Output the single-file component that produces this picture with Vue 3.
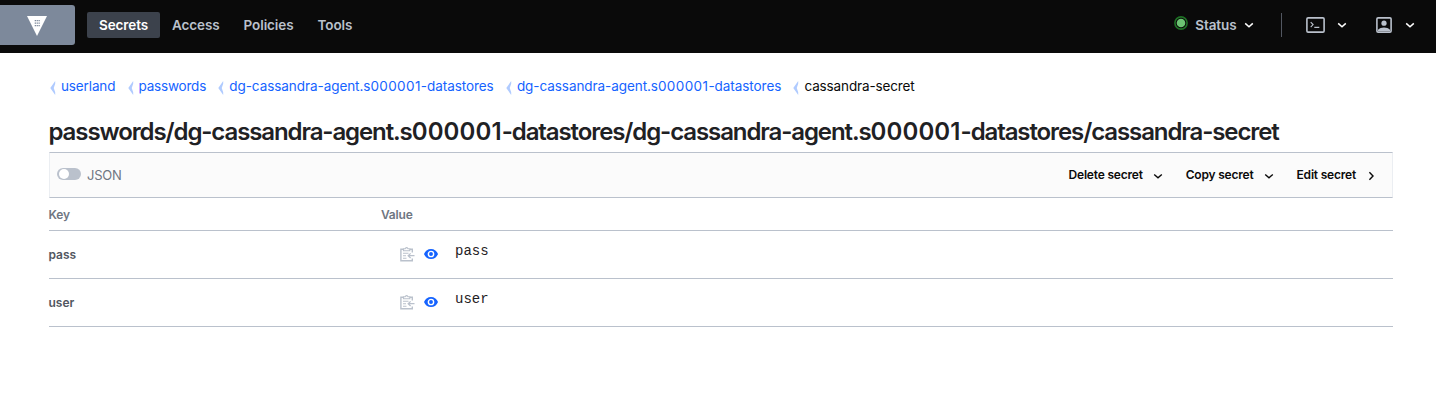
<script setup>
const nav = ['Secrets', 'Access', 'Policies', 'Tools']
const crumbs = [
  'userland',
  'passwords',
  'dg-cassandra-agent.s000001-datastores',
  'dg-cassandra-agent.s000001-datastores',
  'cassandra-secret',
]
const title = crumbs.slice(1).join('/')
// Digits are set wider than the surrounding letters.
const runs = (text) => text.split(/(\d+)/).filter(Boolean).map((t) => ({ t, num: /^\d/.test(t) }))
const rows = [
  { key: 'pass', value: 'pass' },
  { key: 'user', value: 'user' },
]
const actions = [
  { label: 'Delete secret', icon: 'down' },
  { label: 'Copy secret', icon: 'down' },
  { label: 'Edit secret', icon: 'right' },
]
const down = 'M1.2 3.4 5 6.8 8.8 3.4'
const right = 'M3.4 1.3 7 5 3.4 8.7'
</script>

<template>
  <div class="page">
    <header class="topbar">
      <a class="brand">
        <svg width="20" height="20" viewBox="0 0 20 20">
          <path d="M0 0H20L10 20Z" fill="#fff" />
          <path d="M7.7 4.7h5.2M7.7 7.2h5.2M7.7 9.7h5.2" stroke="#7d899b" stroke-width="1.2" stroke-dasharray="1.3 .6" />
        </svg>
      </a>
      <nav class="nav">
        <a v-for="(n, i) in nav" :key="n" :class="{ active: i === 0 }">{{ n }}</a>
      </nav>
      <div class="tools">
        <svg class="dot" width="14" height="14" viewBox="0 0 14 14">
          <circle cx="7" cy="7" r="6.1" fill="#0a0a0a" stroke="#1e7125" stroke-width="1.6" />
          <circle cx="7" cy="7" r="4.3" fill="#6cc473" />
        </svg>
        <span class="status">Status</span>
        <svg class="chev" width="10" height="10" viewBox="0 0 10 10"><path :d="down" /></svg>
        <i class="divider"></i>
        <svg class="console" width="19" height="16" viewBox="0 0 19 16" fill="none">
          <rect x=".9" y=".9" width="17.2" height="14.2" rx="1.2" stroke="#bac1cc" stroke-width="1.6" />
          <path d="M4.7 5.1 7.1 7.6 4.7 10.1M8.3 10.4h5" stroke="#bac1cc" stroke-width="1.1" />
        </svg>
        <svg class="chev c2" width="10" height="10" viewBox="0 0 10 10"><path :d="down" /></svg>
        <svg class="user" width="16" height="16" viewBox="0 0 16 16">
          <rect x=".9" y=".9" width="14.2" height="14.2" rx="1.2" fill="none" stroke="#bac1cc" stroke-width="1.6" />
          <circle cx="8" cy="6.2" r="2.6" fill="#bac1cc" />
          <path d="M2 14V12.7C3.6 11.3 5.6 10.4 8 10.4S12.4 11.3 14 12.7V14Z" fill="#bac1cc" />
        </svg>
        <svg class="chev c3" width="10" height="10" viewBox="0 0 10 10"><path :d="down" /></svg>
      </div>
    </header>

    <main class="main">
      <ul class="crumbs">
        <li v-for="(c, i) in crumbs" :key="i" :class="{ long: c.length > 20 }">
          <svg width="6" height="14" viewBox="0 0 6 14"><path d="M5.2 0 .3 7 5.2 14V11.3L3.7 7 5.2 2.7Z" fill="#b0cbff" /></svg>
          <span><span v-for="(r, j) in runs(c)" :key="j" :class="{ num: r.num }">{{ r.t }}</span></span>
        </li>
      </ul>
      <h1><span v-for="(r, j) in runs(title)" :key="j" :class="{ num: r.num }">{{ r.t }}</span></h1>

      <div class="toolbar">
        <span class="switch"></span>
        <span class="json">JSON</span>
        <div class="actions">
          <button v-for="a in actions" :key="a.label">
            <span>{{ a.label }}</span>
            <svg width="10" height="10" viewBox="0 0 10 10"><path :d="a.icon === 'down' ? down : right" /></svg>
          </button>
        </div>
      </div>

      <div class="row head"><span class="key">Key</span><span>Value</span></div>
      <div v-for="r in rows" :key="r.key" class="row">
        <span class="key">{{ r.key }}</span>
        <div class="value">
          <svg class="copy" width="15" height="15" viewBox="0 0 15 15" fill="none" stroke="#bac1cc">
            <path d="M12.3 5.6V2.3H10M3.5 2.3H.9V13.8H12.3V11.6" stroke-width="1.4" />
            <path d="M3.5 3.8V1.8H5.2Q6.6-.5 8 1.8H9.8V3.8Z" stroke-width="1.1" />
            <path d="M3 6.2H8.5M3 8.7H6M3 11.2H6.5" stroke-width="1.1" />
            <path d="M14.5 8.7H8.5M10.6 6.4 8.2 8.7 10.6 11" stroke-width="1.3" />
          </svg>
          <svg class="eye" width="14" height="10" viewBox="0 0 14 10">
            <path d="M7 0C3.7 0 1.1 2 0 5 1.1 8 3.7 10 7 10S12.9 8 14 5C12.9 2 10.3 0 7 0Z" fill="#1563ff" />
            <circle cx="7" cy="5" r="2.65" fill="#1563ff" stroke="#fff" stroke-width="1.4" />
          </svg>
          <code>{{ r.value }}</code>
        </div>
      </div>
    </main>
  </div>
</template>

<style>
body { margin: 0; background: #fff; }
</style>

<style scoped>
.page { height: 414px; overflow: hidden; background: #fff; font-family: Inter, "Liberation Sans", sans-serif; color: #1f2124; }
svg { display: block; flex: none; }
.topbar { height: 53px; box-sizing: border-box; background: #0a0a0a; display: flex; align-items: center; padding-bottom: 3px; }
.brand { width: 75px; height: 40px; background: #7d899b; border-radius: 0 3px 3px 0; display: flex; align-items: center; padding-left: 27px; box-sizing: border-box; padding-top: 2px; }
.nav { display: flex; margin-left: 12px; }
.nav a { box-sizing: border-box; height: 26px; line-height: 26px; padding: 0 12px; font-size: 13.5px; font-weight: 600; letter-spacing: -.1px; color: #bac1cc; border-radius: 2px; }
.nav a.active { background: #3c424c; color: #fff; }
.tools { margin-left: auto; display: flex; align-items: center; height: 26px; padding-right: 21px; }
.dot { margin-top: -5px; margin-right: 7px; }
.status { font-size: 13.5px; font-weight: 600; letter-spacing: -.1px; color: #bac1cc; line-height: 26px; }
.chev path { fill: none; stroke: #fff; stroke-width: 1.5; }
.chev { margin-left: 7px; }
.divider { width: 1px; height: 24px; background: #525761; margin: 0 25px 0 27px; }
.console { margin-left: -.5px; }
.c2 { margin-left: 12px; }
.user { margin-left: 29px; }
.c3 { margin-left: 13px; }
.main { padding: 0 43px 0 49px; }
.crumbs { list-style: none; margin: 0; padding: 24px 0 0 1px; display: flex; height: 20px; }
.crumbs li { display: flex; font-size: 13.5px; line-height: 19px; letter-spacing: -.13px; color: #1563ff; margin-right: 12.2px; white-space: nowrap; }
.crumbs li:nth-child(2) { letter-spacing: -.2px; }
.crumbs li.long { letter-spacing: -.06px; }
.crumbs li .num { letter-spacing: .4px; }
.crumbs svg { margin: 4px 5px 0 0; }
.crumbs li:last-child { color: #0a0a0a; }
h1 { margin: 20px 0 0 -.5px; height: 35px; font-size: 24px; line-height: 30px; font-weight: 600; letter-spacing: -1.1px; white-space: nowrap; }
h1 .num { letter-spacing: .12px; }
.toolbar { height: 46px; box-sizing: border-box; border: 1px solid #ebeef2; border-top-color: #bac1cc; border-bottom-color: #bac1cc; background: #fbfbfb; display: flex; align-items: center; padding: 0 16px 0 7px; }
.switch { width: 24px; height: 12px; border-radius: 6px; background: #bac1cc; display: flex; margin-top: -3px; }
.switch::after { content: ""; width: 10px; height: 10px; margin: 1px 0 0 2px; border-radius: 50%; background: #fff; }
.json { margin-left: 6px; font-size: 13px; letter-spacing: -.2px; color: #6f7682; line-height: 20px; }
.actions { display: flex; margin-left: auto; gap: 23px; }
button { display: flex; align-items: center; padding: 0; border: 0; background: none; font: 600 12px/20px Inter, sans-serif; letter-spacing: -.2px; color: #0a0a0a; }
button svg { margin: 2px 0 0 10px; }
button path { fill: none; stroke: #0a0a0a; stroke-width: 1.4; }
.row { height: 48px; box-sizing: border-box; border-bottom: 1px solid #bac1cc; display: flex; align-items: center; font-size: 12px; font-weight: 600; color: #525761; }
.row.head { height: 33px; color: #6f7682; }
.key { width: 332px; text-indent: -.5px; }
.row.head span { letter-spacing: -.2px; }
.value { display: flex; align-items: center; padding-left: 19px; }
.eye { margin: -2px 0 0 9px; }
.copy { margin-top: -1px; }
code { font: 14px/20px "Liberation Mono", monospace; color: #1f2124; margin: -8px 0 0 17px; }
</style>
